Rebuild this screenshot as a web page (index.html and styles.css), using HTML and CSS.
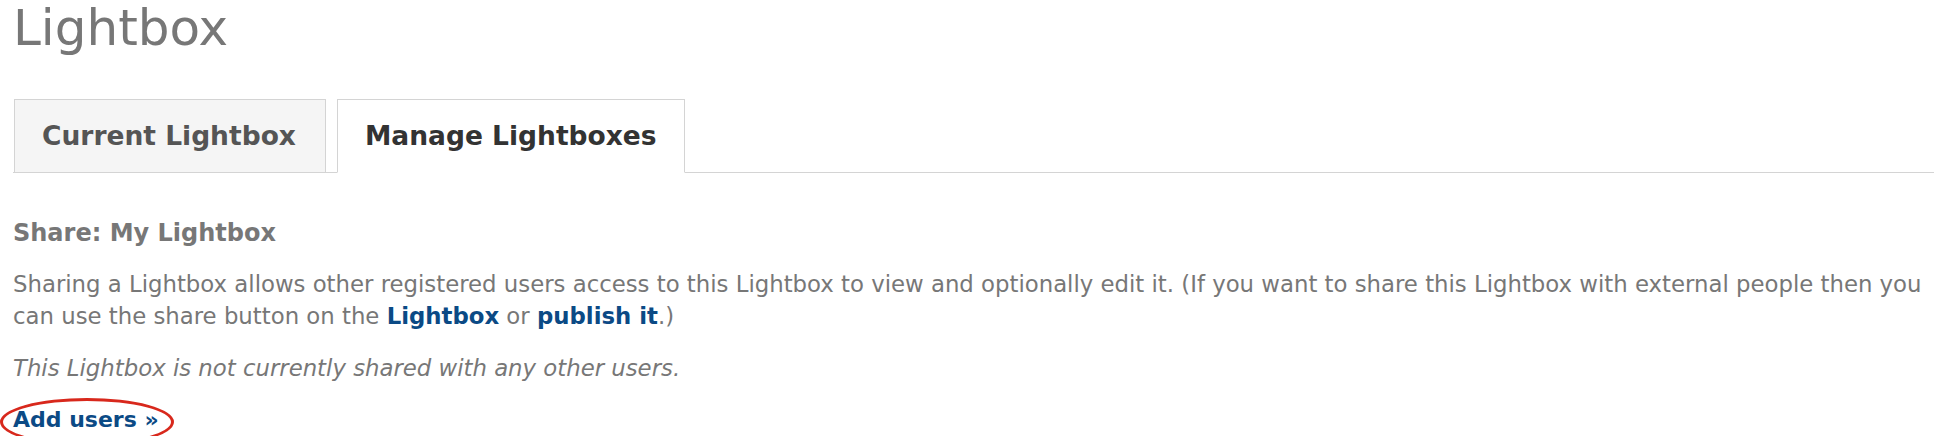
FILE: index.html
```html
<!DOCTYPE html>
<html lang="en">
<head>
<meta charset="UTF-8">
<meta name="viewport" content="width=device-width, initial-scale=1.0">
<title>Lightbox</title>
<link rel="stylesheet" href="styles.css">
</head>
<body>

<div class="page">
  <h1>Lightbox</h1>

  <ul class="tabs">
    <li class="tab"><a href="#">Current Lightbox</a></li>
    <li class="tab active"><a href="#">Manage Lightboxes</a></li>
  </ul>

  <h3>Share: My Lightbox</h3>
  <p>Sharing a Lightbox allows other registered users access to this Lightbox to view and optionally edit it. (If you want to share this Lightbox with external people then you can use the share button on the <a href="#">Lightbox</a> or <a href="#">publish it</a>.)</p>
  <p class="note">This Lightbox is not currently shared with any other users.</p>
  <p class="add"><span class="circled"><a href="#">Add users &raquo;</a></span></p>
</div>

</body>
</html>
```

FILE: styles.css
```css
body {
  font-family: "DejaVu Sans", "Liberation Sans", sans-serif;
  margin: 0;
  padding: 0;
  background-color: #fff;
  color: #777;
}
.page {
  padding-left: 13px;
}
h1 {
  margin: 0;
  font-size: 50px;
  font-weight: normal;
  line-height: 56px;
  color: #777;
}
.tabs {
  list-style: none;
  margin: 43px 0 0 0;
  padding: 0 0 0 1px;
  display: flex;
  gap: 11px;
  border-bottom: 1px solid #d4d4d4;
}
.tab {
  margin-bottom: -1px;
  border: 1px solid #d4d4d4;
  background-color: #f5f5f5;
}
.tab a {
  display: block;
  padding: 20px 29px 20px 27px;
  font-size: 26.5px;
  line-height: 32px;
  font-weight: bold;
  color: #555;
  text-decoration: none;
}
.tab.active {
  background-color: #fff;
  border-bottom-color: #fff;
}
.tab.active a {
  padding: 20px 27px;
  color: #333;
}
h3 {
  margin: 45px 0 0 0;
  font-size: 24px;
  line-height: 30px;
  color: #777;
}
p {
  margin: 20px 0 0 0;
  font-size: 22.8px;
  line-height: 32px;
}
p a {
  color: #0b4a85;
  font-weight: bold;
  text-decoration: none;
}
.note {
  font-style: italic;
}
.add {
  font-size: 22px;
}
.circled {
  position: relative;
}
.circled::after {
  content: "";
  position: absolute;
  left: -13px;
  top: -9px;
  width: 168px;
  height: 42px;
  border: 3.5px solid #d8281c;
  border-radius: 50%;
}
```
